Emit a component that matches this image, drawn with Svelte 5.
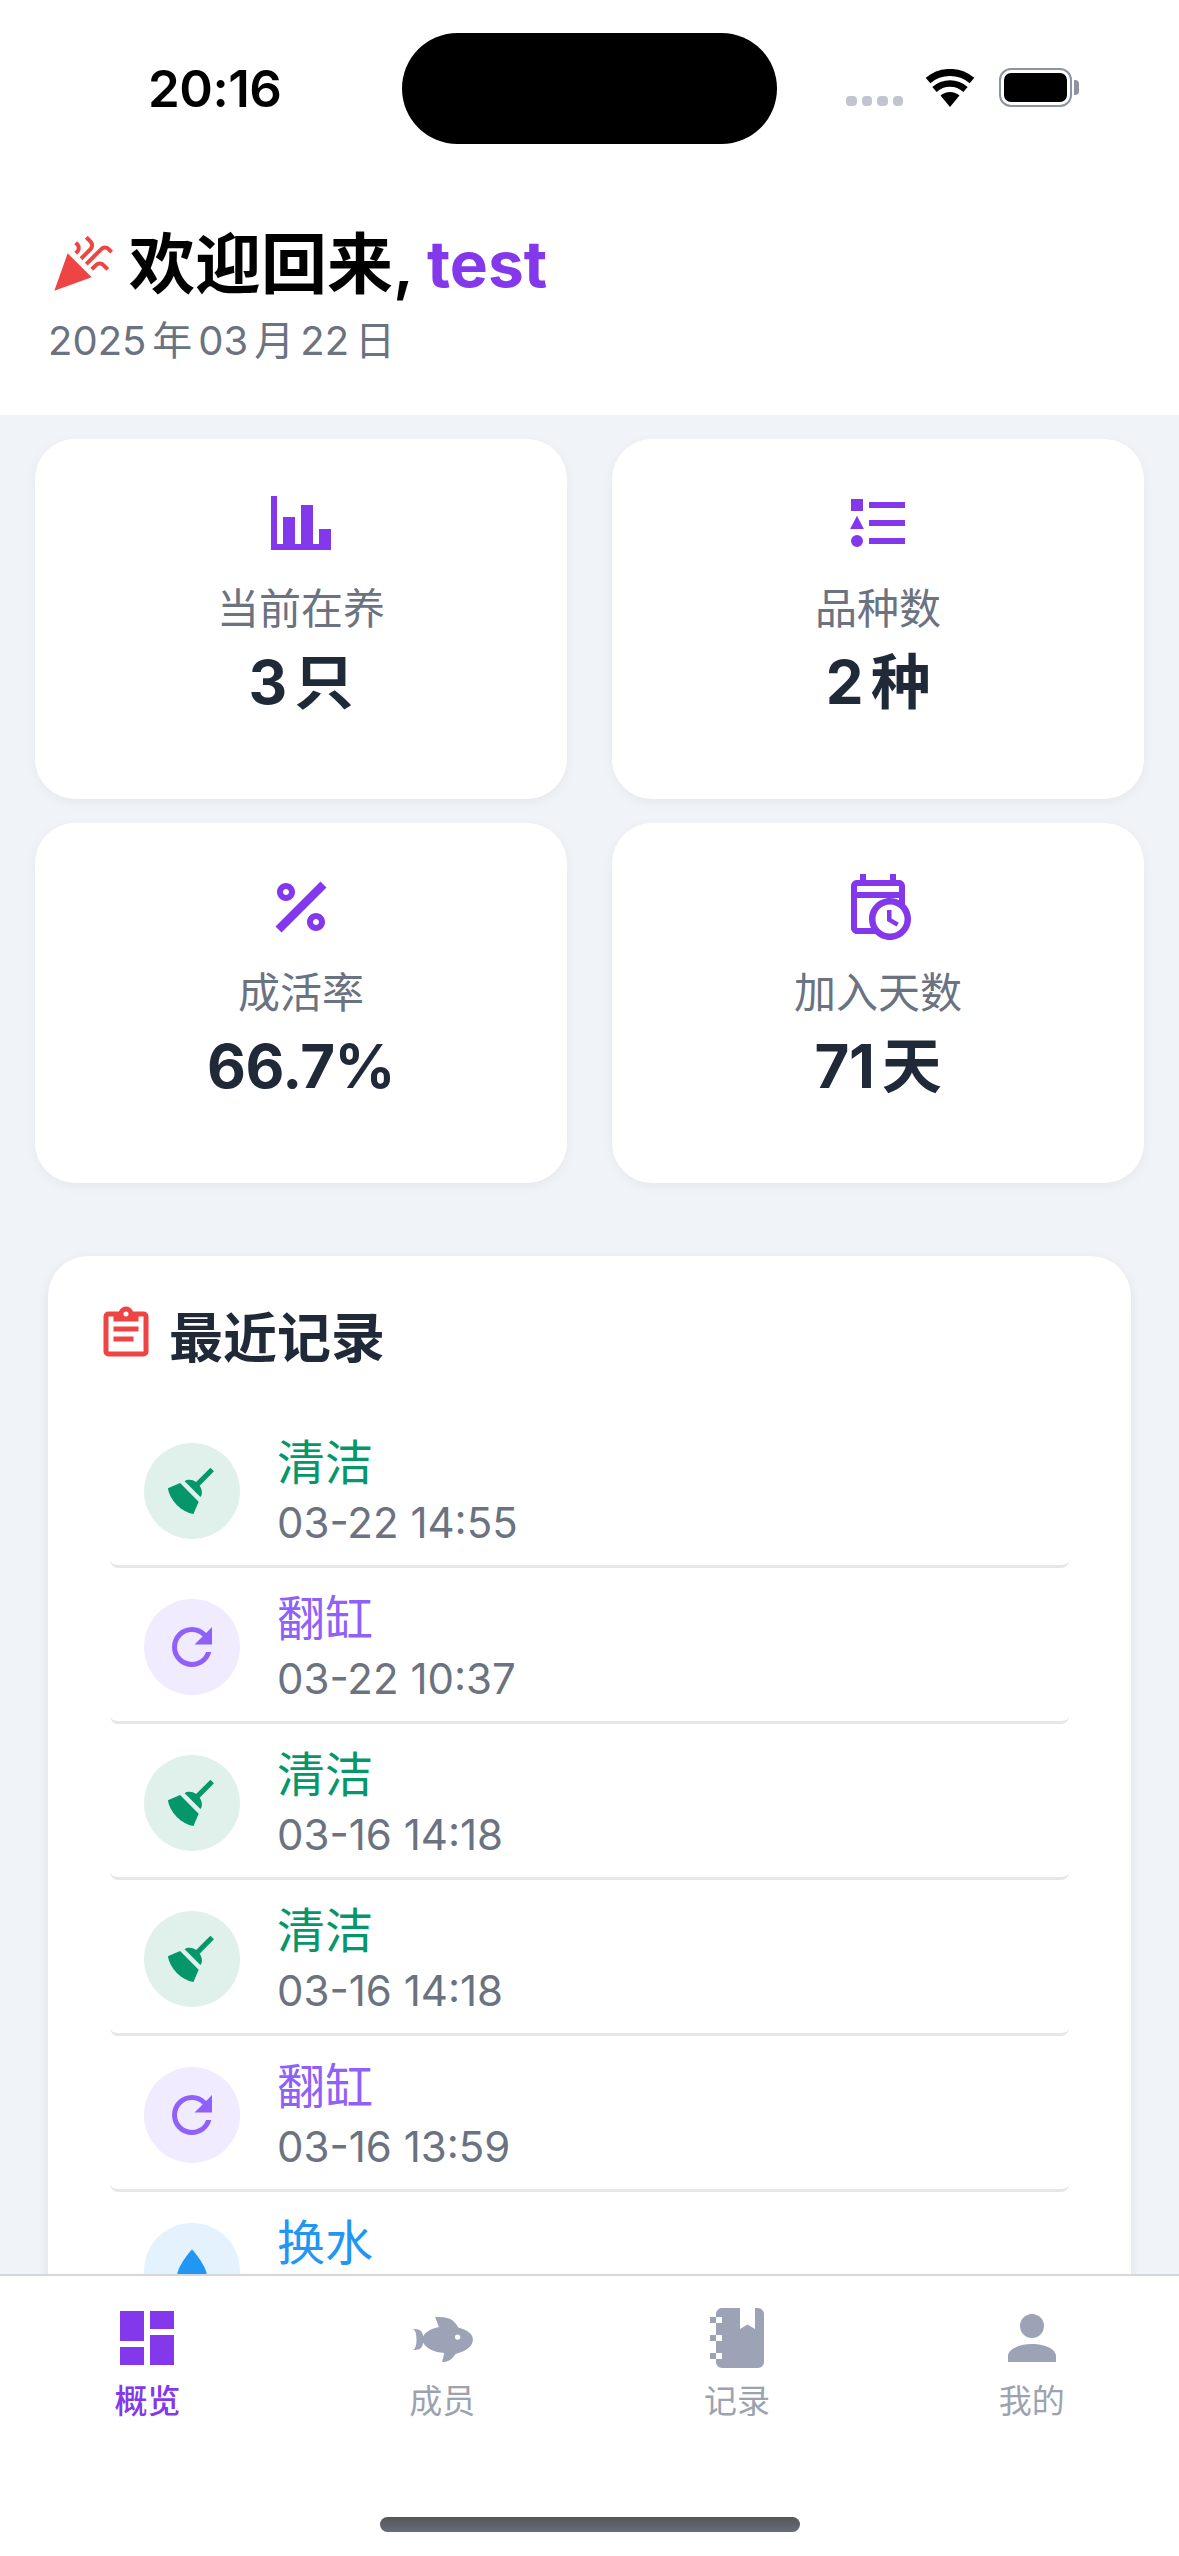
<script>
    const mdi = {
        bars: "M2 3H4V19H6V10H10V19H12V6H16V19H18V14H22V21H2Z",
        percent: "M18.5 3.5L20.5 5.5L5.5 20.5L3.5 18.5L18.5 3.5M7 4C8.66 4 10 5.34 10 7C10 8.66 8.66 10 7 10C5.34 10 4 8.66 4 7C4 5.34 5.34 4 7 4M17 14C18.66 14 20 15.34 20 17C20 18.66 18.66 20 17 20C15.34 20 14 18.66 14 17C14 15.34 15.34 14 17 14M7 6C6.45 6 6 6.45 6 7C6 7.55 6.45 8 7 8C7.55 8 8 7.55 8 7C8 6.45 7.55 6 7 6M17 16C16.45 16 16 16.45 16 17C16 17.55 16.45 18 17 18C17.55 18 18 17.55 18 17C18 16.45 17.55 16 17 16Z",
        shapes: "M3 4H7V8H3ZM5 9.6L7.3 14H2.7ZM7 18A2 2 0 0 1 3 18A2 2 0 0 1 7 18ZM9 5H21V7H9ZM9 11H21V13H9ZM9 17H21V19H9Z",
        calendar: "M6 1V3H5C3.89 3 3 3.89 3 5V19C3 20.1 3.89 21 5 21H11.1C12.36 22.24 14.09 23 16 23C19.87 23 23 19.87 23 16C23 14.09 22.24 12.36 21 11.1V5C21 3.9 20.1 3 19 3H18V1H16V3H8V1H6M5 5H19V7H5V5M5 9H19V9.67C18.09 9.24 17.07 9 16 9C12.13 9 9 12.13 9 16C9 17.07 9.24 18.09 9.67 19H5V9M16 11.15C18.68 11.15 20.85 13.32 20.85 16C20.85 18.68 18.68 20.85 16 20.85C13.32 20.85 11.15 18.68 11.15 16C11.15 13.32 13.32 11.15 16 11.15M15 13V16.69L18.19 18.53L18.94 17.23L16.5 15.82V13H15Z",
        party: "M14.53 1.45L13.45 2.53L15.05 4.13C15.27 4.38 15.38 4.67 15.38 5S15.27 5.64 15.05 5.86L11.5 9.47L12.5 10.55L16.13 6.94C16.66 6.35 16.92 5.7 16.92 5C16.92 4.3 16.66 3.64 16.13 3.05L14.53 1.45M10.55 3.47L9.47 4.55L10.08 5.11C10.3 5.33 10.41 5.63 10.41 6S10.3 6.67 10.08 6.89L9.47 7.45L10.55 8.53L11.11 7.92C11.64 7.33 11.91 6.69 11.91 6C11.91 5.28 11.64 4.63 11.11 4.03L10.55 3.47M21 5.06C20.31 5.06 19.67 5.33 19.08 5.86L13.45 11.5L14.5 12.55L20.17 6.94C20.39 6.7 20.67 6.58 21 6.58S21.61 6.7 21.83 6.94L22.95 8.05L24 7L22.89 5.86C22.33 5.33 21.69 5.06 21 5.06M7 8L2 22L16 17L7 8M19 11.06C18.31 11.06 17.67 11.33 17.08 11.86L15.5 13.45L16.55 14.5L18.17 12.94C18.39 12.7 18.66 12.58 19 12.58C19.33 12.58 19.63 12.7 19.89 12.94L21.5 14.55L22.55 13.5L20.95 11.86C20.36 11.33 19.7 11.06 19 11.06Z",
        clipboard: "M19,3H14.82C14.4,1.84 13.3,1 12,1C10.7,1 9.6,1.84 9.18,3H5A2,2 0 0,0 3,5V19A2,2 0 0,0 5,21H19A2,2 0 0,0 21,19V5A2,2 0 0,0 19,3M12,3A1,1 0 0,1 13,4A1,1 0 0,1 12,5A1,1 0 0,1 11,4A1,1 0 0,1 12,3M7,7H17V5H19V19H5V5H7V7M17,11H7V9H17V11M15,15H7V13H15V15Z",
        broom: "M19.36,2.72L20.78,4.14L15.06,9.85C16.13,11.39 16.28,13.24 15.38,14.44L9.06,8.12C10.26,7.22 12.11,7.37 13.65,8.44L19.36,2.72M5.93,17.57C3.92,15.56 2.69,13.16 2.35,10.92L7.23,8.83L14.67,16.27L12.58,21.15C10.34,20.81 7.94,19.58 5.93,17.57Z",
        reload: "M17.65,6.35C16.2,4.9 14.21,4 12,4A8,8 0 0,0 4,12A8,8 0 0,0 12,20C15.73,20 18.84,17.45 19.73,14H17.65C16.83,16.33 14.61,18 12,18A6,6 0 0,1 6,12A6,6 0 0,1 12,6C13.66,6 15.14,6.69 16.22,7.78L13,11H20V4L17.65,6.35Z",
        water: "M12,20A6,6 0 0,1 6,14C6,10 12,3.25 12,3.25C12,3.25 18,10 18,14A6,6 0 0,1 12,20Z",
        dashboard: "M13,3V9H21V3M13,21H21V11H13M3,21H11V15H3M3,13H11V3H3V13Z",
        fish: "M12 20L12.76 17C9.5 16.79 6.59 15.4 5.75 13.58C5.66 14.06 5.53 14.5 5.33 14.83C4.67 16 3.33 16 2 16C3.1 16 3.5 14.43 3.5 12.5C3.5 10.57 3.1 9 2 9C3.33 9 4.67 9 5.33 10.17C5.53 10.5 5.66 10.94 5.75 11.42C6.4 10 8.32 8.85 11 8.3L9.700 5C11.500 5 13.500 5 14.800 5.700C16 6.400 16.800 7.400 17.400 8.500C20.300 9.200 22.300 10.600 22.300 12.500C22.300 13.600 21.800 14.500 21 15.200C19.800 16.300 18.200 16.900 16.500 17.300C15.700 18.700 14.200 20 12 20M17.200 10.800A0.900 0.900 0 0 0 16.300 11.700A0.900 0.900 0 0 0 17.200 12.600A0.900 0.900 0 0 0 18.100 11.700A0.900 0.900 0 0 0 17.200 10.800Z",
        notebook: "M3,7V5H5V4C5,2.89 5.9,2 7,2H13V9L15.5,7.5L18,9V2H19C20.05,2 21,2.95 21,4V20C21,21.05 20.05,22 19,22H7C5.95,22 5,21.05 5,20V19H3V17H5V13H3V11H5V7H3M7,11H5V13H7V11M7,7V5H5V7H7M7,19V17H5V19H7Z",
        account: "M12,4A4,4 0 0,1 16,8A4,4 0 0,1 12,12A4,4 0 0,1 8,8A4,4 0 0,1 12,4M12,14C16.42,14 20,15.79 20,18V20H4V18C4,15.79 7.58,14 12,14Z"
    };

    const stats = [
        {icon: "bars", label: "当前在养", value: "3只"},
        {icon: "shapes", label: "品种数", value: "2种"},
        {icon: "percent", label: "成活率", value: "66.7%"},
        {icon: "calendar", label: "加入天数", value: "71天"}
    ];

    const kinds = {
        clean: {name: "清洁", icon: "broom", cls: "clean"},
        flip: {name: "翻缸", icon: "reload", cls: "flip"},
        water: {name: "换水", icon: "water", cls: "water"}
    };

    // last row runs under the tab bar, its time is never visible
    const records = [
        {kind: kinds.clean, time: "03-22 14:55"},
        {kind: kinds.flip, time: "03-22 10:37"},
        {kind: kinds.clean, time: "03-16 14:18"},
        {kind: kinds.clean, time: "03-16 14:18"},
        {kind: kinds.flip, time: "03-16 13:59"},
        {kind: kinds.water, time: ""}
    ];

    const tabs = [
        {icon: "dashboard", label: "概览", active: true},
        {icon: "fish", label: "成员"},
        {icon: "notebook", label: "记录"},
        {icon: "account", label: "我的"}
    ];
</script>

<div class="screen">
    <div class="top">
        <div class="status">
            <span class="clock">20:16</span>
            <div class="island"></div>
            <div class="signal">
                <i></i><i></i><i></i><i></i>
            </div>
            <svg class="wifi" viewBox="0 0 50 38" width="50" height="38">
                <path d="M25 38L15.5 26.5A14.5 14.5 0 0 1 34.500 26.500Z" fill="#000"/>
                <path d="M9.500 20.500A23 23 0 0 1 40.500 20.500" fill="none" stroke="#000" stroke-width="6.500"/>
                <path d="M3 11.500A34 34 0 0 1 47 11.500" fill="none" stroke="#000" stroke-width="7"/>
            </svg>
            <div class="battery">
                <div class="cell"></div>
            </div>
            <div class="nub"></div>
        </div>

        <h1 class="hello">
            <svg class="party" viewBox="0 0 24 24"><path d={mdi.party}/></svg>
            <span>欢迎回来,</span>
            <span class="name">test</span>
        </h1>
        <p class="date">2025<span class="cjk">年</span>03<span class="cjk">月</span>22<span class="cjk">日</span></p>
    </div>

    <main>
        <div class="grid">
            {#each stats as s}
                <div class="card">
                    <svg class="stat-icon" viewBox="0 0 24 24"><path fill-rule="evenodd" d={mdi[s.icon]}/></svg>
                    <div class="label">{s.label}</div>
                    <div class="value">{s.value}</div>
                </div>
            {/each}
        </div>

        <section>
            <h2>
                <svg class="clip" viewBox="0 0 24 24"><path d={mdi.clipboard}/></svg>
                最近记录
            </h2>
            <ul>
                {#each records as r}
                    <li class={r.kind.cls}>
                        <div class="badge">
                            <svg viewBox="0 0 24 24"><path d={mdi[r.kind.icon]}/></svg>
                        </div>
                        <div class="info">
                            <div class="kind">{r.kind.name}</div>
                            <div class="time">{r.time}</div>
                        </div>
                    </li>
                {/each}
            </ul>
        </section>
    </main>

    <nav>
        <div class="tabs">
            {#each tabs as t}
                <div class="tab" class:active={t.active}>
                    <svg viewBox="0 0 24 24"><path d={mdi[t.icon]} fill-rule="evenodd"/></svg>
                    <span>{t.label}</span>
                </div>
            {/each}
        </div>
        <div class="home"></div>
    </nav>
</div>

<style>
    :global(body) {
        margin: 0;
        background: #fff;
    }
    .screen {
        width: 1179px;
        height: 2556px;
        display: flex;
        flex-direction: column;
        overflow: hidden;
        font-family: Inter, "Noto Sans CJK SC", sans-serif;
        text-autospace: normal;
    }

    .top {
        background: #fff;
        height: 415px;
        flex: none;
    }
    .status {
        display: flex;
        align-items: flex-start;
        height: 144px;
        box-sizing: border-box;
        padding: 33px 0 0 148px;
    }
    .clock {
        width: 254px;
        margin-top: 25px;
        font-size: 51px;
        line-height: 62px;
        font-weight: 600;
        letter-spacing: -0.5px;
        color: #000;
    }
    .island {
        width: 375px;
        height: 111px;
        background: #000;
        border-radius: 56px;
    }
    .signal {
        display: flex;
        gap: 5px;
        margin: 63px 0 0 69px;
    }
    .signal i {
        width: 10.500px;
        height: 10px;
        border-radius: 4px;
        background: #c2c5d0;
    }
    .wifi {
        margin: 36px 0 0 22px;
    }
    .battery {
        box-sizing: border-box;
        width: 73px;
        height: 39px;
        margin: 35px 0 0 24px;
        padding: 3px;
        border: 2px solid #8e93a3;
        border-radius: 12px;
    }
    .cell {
        height: 100%;
        background: #000;
        border-radius: 7px;
    }
    .nub {
        width: 5px;
        height: 15px;
        margin: 47px 0 0 2px;
        background: #8e93a3;
        border-radius: 0 4px 4px 0;
    }

    .hello {
        display: flex;
        align-items: center;
        height: 80px;
        margin: 80px 0 0 49px;
        font-size: 66px;
        line-height: 80px;
        font-weight: 600;
        color: #000;
    }
    .party {
        width: 64px;
        height: 64px;
        margin-right: 16px;
        fill: #ef4444;
    }
    .name {
        margin-left: 13px;
        font-size: 64px;
        font-weight: 700;
        color: #8338ec;
    }
    .date {
        margin: 9px 0 0 48px;
        font-size: 40px;
        line-height: 56px;
        color: #6b7280;
    }
    .cjk {
        margin: 0 1px;
    }

    main {
        flex: 1;
        min-height: 0;
        overflow: hidden;
        background: #f0f4f8;
    }
    .grid {
        display: grid;
        grid-template-columns: 532px 532px;
        column-gap: 45px;
        row-gap: 24px;
        padding: 24px 35px 0;
    }
    .card {
        height: 360px;
        box-sizing: border-box;
        padding-top: 48px;
        display: flex;
        flex-direction: column;
        align-items: center;
        background: #fff;
        border-radius: 40px;
        box-shadow: 0 3px 12px rgba(0, 0, 0, 0.05);
    }
    .stat-icon {
        width: 72px;
        height: 72px;
        fill: #8338ec;
    }
    .label {
        margin-top: 25px;
        font-size: 42px;
        line-height: 50px;
        color: #6b7280;
    }
    .value {
        margin-top: 13px;
        font-size: 60px;
        line-height: 70px;
        font-weight: 700;
        letter-spacing: -0.5px;
        color: #1f2937;
    }

    section {
        margin: 73px 48px 0;
        padding: 48px 60px 0;
        background: #fff;
        border-radius: 40px;
        box-shadow: 0 3px 12px rgba(0, 0, 0, 0.08);
    }
    h2 {
        display: flex;
        align-items: center;
        height: 60px;
        margin: 0 0 48px -12px;
        font-size: 54px;
        font-weight: 700;
        color: #1f2937;
    }
    .clip {
        width: 60px;
        height: 60px;
        margin-right: 13px;
        fill: #ef4444;
    }
    ul {
        list-style: none;
        margin: 0;
        padding: 0;
    }
    li {
        display: flex;
        align-items: center;
        height: 156px;
        box-sizing: border-box;
        margin: 0 2px;
        padding: 5px 0 0 34px;
        border-bottom: 3px solid #e5e7eb;
        border-radius: 0 0 8px 8px;
    }
    .badge {
        width: 96px;
        height: 96px;
        flex: none;
        display: flex;
        align-items: center;
        justify-content: center;
        border-radius: 50%;
    }
    .badge svg {
        width: 60px;
        height: 60px;
        fill: currentColor;
    }
    .info {
        margin-left: 37px;
        margin-top: 5px;
    }
    .kind {
        font-size: 48px;
        line-height: 58px;
    }
    .time {
        min-height: 62px;
        font-size: 42px;
        line-height: 62px;
        color: #6b7280;
    }
    .clean .badge { background: #dff1ea; color: #059669; }
    .clean .kind { color: #059669; }
    .flip .badge { background: #f0ebfe; color: #9061f9; }
    .flip .kind { color: #9061f9; }
    .water .badge { background: #e3f2fd; color: #2196f3; }
    .water .kind { color: #2196f3; }

    nav {
        flex: none;
        height: 282px;
        box-sizing: border-box;
        background: #fff;
        border-top: 2px solid #d6d6de;
    }
    .tabs {
        display: grid;
        grid-template-columns: repeat(4, 1fr);
        padding-top: 26px;
    }
    .tab {
        display: flex;
        flex-direction: column;
        align-items: center;
        color: #9ca3af;
    }
    .tab svg {
        width: 72px;
        height: 72px;
        fill: #9ca3b6;
    }
    .tab span {
        margin-top: 7px;
        font-size: 33px;
        line-height: 40px;
    }
    .tab.active {
        color: #8338ec;
    }
    .tab.active svg {
        fill: #8338ec;
    }
    .tab.active span {
        font-weight: 500;
    }
    .home {
        width: 420px;
        height: 15px;
        margin: 96px auto 0;
        border-radius: 8px;
        background: linear-gradient(#555, #666c7c);
    }
</style>
